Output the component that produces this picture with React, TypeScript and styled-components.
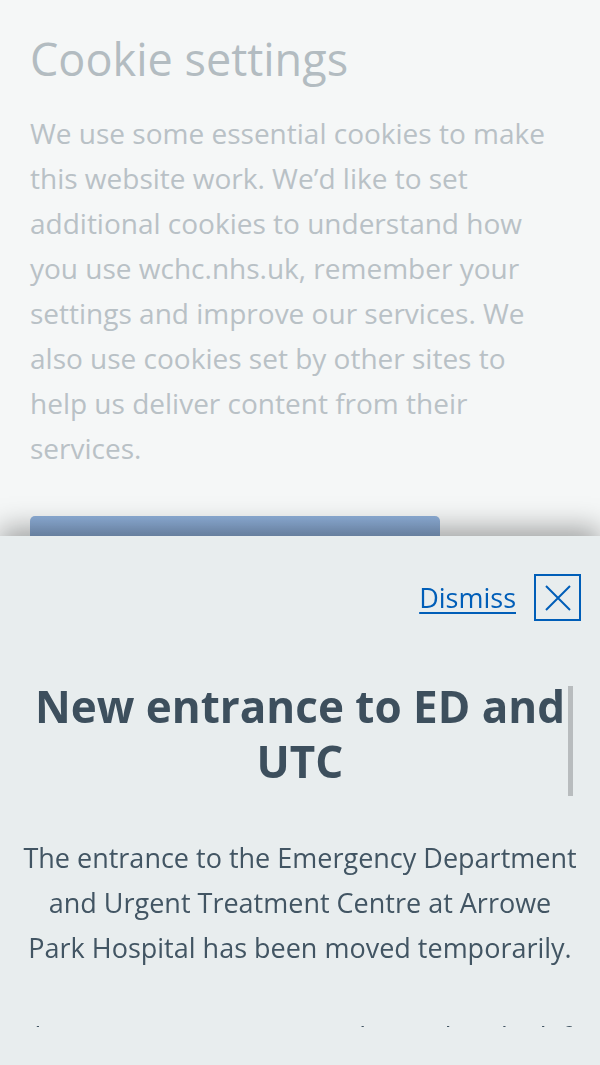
import React from "react";
import styled, { createGlobalStyle } from "styled-components";

const GlobalStyle = createGlobalStyle`
  html, body { margin: 0; padding: 0; }
  body {
    background: #f5f7f7;
    font-family: "Open Sans", "Noto Sans", "Liberation Sans", sans-serif;
    overflow: hidden;
  }
`;

const Page = styled.div`
  width: 600px;
  height: 1065px;
  position: relative;
  overflow: hidden;
`;

const CookiePanel = styled.section`
  padding: 31px 50px 0 30px;
  background: #f5f7f7;
`;

const CookieTitle = styled.h2`
  margin: 0 0 24px 0;
  font-size: 45px;
  line-height: 56px;
  font-weight: 400;
  color: #b3bcc1;
`;

const CookieText = styled.p`
  margin: 0;
  font-size: 28px;
  line-height: 45px;
  color: #b9c1c6;
`;

const PrimaryButton = styled.button`
  display: block;
  margin-top: 45px;
  width: 410px;
  height: 62px;
  padding: 0 0 2px 0;
  border: 0;
  border-radius: 5px;
  background: linear-gradient(#8fb0da, #7f9dc4);
  color: #ffffff;
  font-family: inherit;
  font-weight: 700;
  font-size: 27px;
`;

const Sheet = styled.aside`
  position: fixed;
  left: 0;
  right: 0;
  top: 536px;
  bottom: 0;
  background: #e8edee;
  box-shadow: 0 -8px 26px rgba(0, 0, 0, 0.35);
  display: flex;
  flex-direction: column;
  padding-bottom: 38px;
  box-sizing: border-box;
`;

const SheetHeader = styled.div`
  display: flex;
  justify-content: flex-end;
  align-items: center;
  gap: 18px;
  padding: 38px 19px 0 0;
`;

const DismissLink = styled.a`
  color: #005eb8;
  font-size: 27px;
  text-decoration: underline;
  text-decoration-thickness: 2px;
  text-underline-offset: 4px;
  cursor: pointer;
`;

const CloseButton = styled.button`
  width: 47px;
  height: 47px;
  box-sizing: border-box;
  border: 2px solid #005eb8;
  background: transparent;
  padding: 0;
  display: flex;
  align-items: center;
  justify-content: center;
`;

const SheetBody = styled.div`
  flex: 1;
  overflow: hidden;
  position: relative;
  padding: 0 18px;
  text-align: center;
`;

const Scrollbar = styled.div`
  position: absolute;
  right: 27px;
  top: 65px;
  width: 5px;
  height: 110px;
  background: #b8bcbe;
`;

const NoticeTitle = styled.h1`
  margin: 58px -10px 46px -10px;
  font-size: 44px;
  line-height: 55px;
  font-weight: 700;
  color: #3d4f5d;
`;

const NoticeText = styled.p`
  margin: 0 0 44px 0;
  font-size: 27px;
  line-height: 45px;
  color: #425563;
`;

export default function App() {
  return (
    <Page>
      <GlobalStyle />
      <CookiePanel>
        <CookieTitle>Cookie settings</CookieTitle>
        <CookieText>
          We use some essential cookies to make this website work. We’d like to
          set additional cookies to understand how you use wchc.nhs.uk,
          remember your settings and improve our services. We also use cookies
          set by other sites to help us deliver content from their services.
        </CookieText>
        <PrimaryButton>I'm OK with analytics cookies</PrimaryButton>
      </CookiePanel>
      <Sheet>
        <SheetHeader>
          <DismissLink>Dismiss</DismissLink>
          <CloseButton aria-label="Close">
            <svg width="28" height="28" viewBox="0 0 28 28">
              <path
                d="M2 2 L26 26 M26 2 L2 26"
                stroke="#005eb8"
                strokeWidth="2"
                fill="none"
              />
            </svg>
          </CloseButton>
        </SheetHeader>
        <SheetBody>
          <Scrollbar />
          <NoticeTitle>New entrance to ED and UTC</NoticeTitle>
          <NoticeText>
            The entrance to the Emergency Department and Urgent Treatment Centre
            at Arrowe Park Hospital has been moved temporarily.
          </NoticeText>
          <NoticeText>
            The temporary entrance is located to the left of the main hospital
            entrance.
          </NoticeText>
        </SheetBody>
      </Sheet>
    </Page>
  );
}
